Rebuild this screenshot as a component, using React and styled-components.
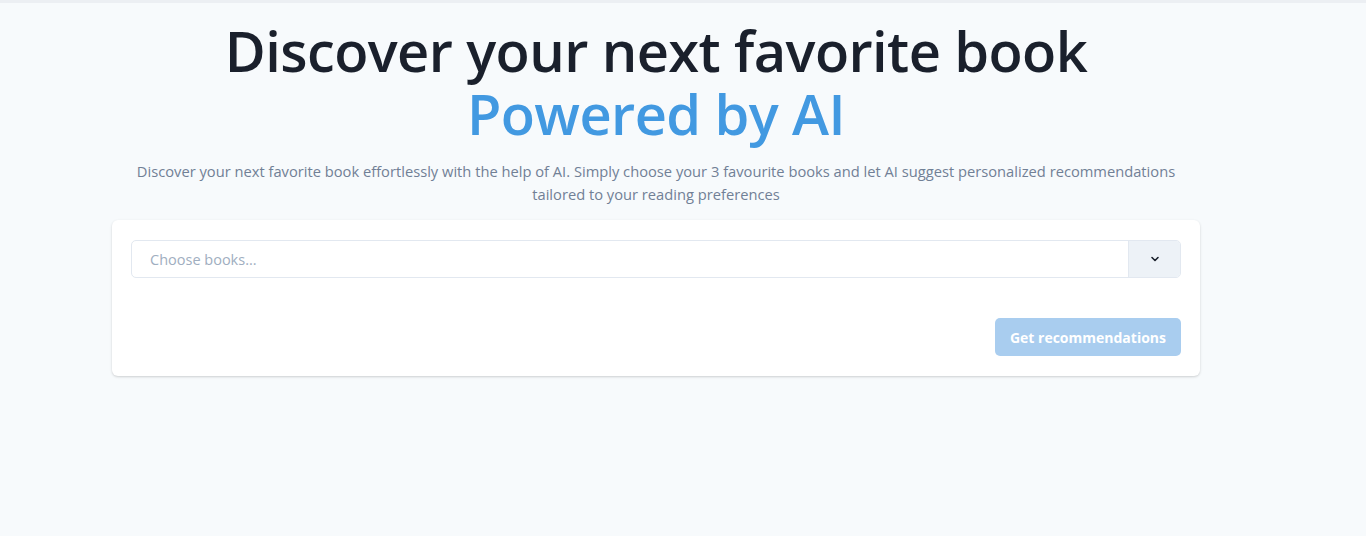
import styled, { createGlobalStyle } from "styled-components";

const GlobalStyle = createGlobalStyle`
  * {
    box-sizing: border-box;
  }
  body {
    margin: 0;
    background-color: #f7fafc;
    font-family: "Open Sans", "Noto Sans", sans-serif;
    color: #1a202c;
  }
`;

const TopBar = styled.div`
  height: 3px;
  background-color: #eceff3;
`;

const Page = styled.main`
  min-height: 533px;
  display: flex;
  flex-direction: column;
  align-items: center;
  padding: 16px 54px 0 0;
`;

const Hero = styled.section`
  width: 1088px;
  display: flex;
  flex-direction: column;
  align-items: center;
  text-align: center;
`;

const Title = styled.h1`
  margin: 0;
  font-size: 56px;
  font-weight: 600;
  line-height: 63px;
  letter-spacing: -0.6px;
  color: #1a202c;
`;

const Highlight = styled.span`
  display: block;
  color: #4299e1;
`;

const Lead = styled.p`
  margin: 15px 0 14px;
  max-width: 1060px;
  font-size: 14.7px;
  line-height: 23px;
  color: #718096;
`;

const Card = styled.div`
  width: 100%;
  background-color: #fff;
  border-radius: 6px;
  box-shadow: 0 1px 3px rgba(0, 0, 0, 0.12), 0 1px 2px rgba(0, 0, 0, 0.06);
  padding: 20px 19px 20px 19px;
  display: flex;
  flex-direction: column;
  gap: 40px;
`;

const Select = styled.div`
  display: flex;
  height: 38px;
  border: 1px solid #e2e8f0;
  border-radius: 5px;
  overflow: hidden;
`;

const Placeholder = styled.div`
  flex: 1;
  display: flex;
  align-items: center;
  padding-left: 18px;
  font-size: 14.5px;
  color: #a0aec0;
  text-align: left;
`;

const Toggle = styled.div`
  width: 52px;
  display: flex;
  align-items: center;
  justify-content: center;
  background-color: #edf2f7;
  border-left: 1px solid #e2e8f0;
  color: #1a202c;
`;

const Actions = styled.div`
  display: flex;
  justify-content: flex-end;
`;

const Button = styled.button`
  height: 38px;
  padding: 0 15px;
  border: none;
  border-radius: 5px;
  background-color: #a9cdef;
  color: #fff;
  font-family: inherit;
  font-size: 14px;
  font-weight: 700;
  cursor: not-allowed;
`;

function Chevron() {
  return (
    <svg width="12" height="12" viewBox="0 0 24 24" fill="none">
      <path
        d="M6 9l6 6 6-6"
        stroke="currentColor"
        strokeWidth="3.2"
        strokeLinecap="round"
        strokeLinejoin="round"
      />
    </svg>
  );
}

export default function App() {
  return (
    <>
      <GlobalStyle />
      <TopBar />
      <Page>
        <Hero>
          <Title>
            Discover your next favorite book
            <Highlight>Powered by AI</Highlight>
          </Title>
          <Lead>
            Discover your next favorite book effortlessly with the help of AI.
            Simply choose your 3 favourite books and let AI suggest personalized
            recommendations tailored to your reading preferences
          </Lead>
          <Card>
            <Select>
              <Placeholder>Choose books...</Placeholder>
              <Toggle>
                <Chevron />
              </Toggle>
            </Select>
            <Actions>
              <Button disabled>Get recommendations</Button>
            </Actions>
          </Card>
        </Hero>
      </Page>
    </>
  );
}
